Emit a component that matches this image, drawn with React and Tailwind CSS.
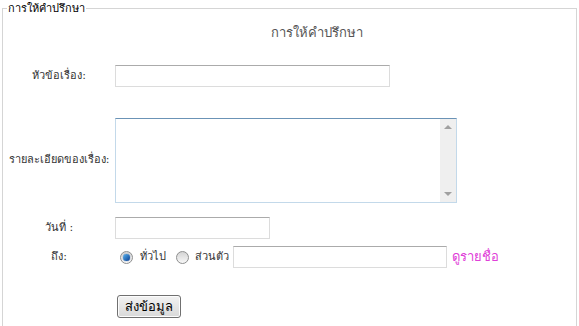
import React, { useState } from 'react';

const Radio = ({ checked, onClick }) => (
  <span
    onClick={onClick}
    className="inline-flex h-[13px] w-[13px] shrink-0 cursor-pointer items-center justify-center rounded-full border border-[#8e8f8f] bg-gradient-to-b from-[#d4d4d4] to-[#f8f8f8]"
  >
    {checked && (
      <span className="h-[7px] w-[7px] rounded-full bg-gradient-to-br from-[#5db6f0] to-[#0b3d91] shadow-[0_0_1px_#0b3d91]" />
    )}
  </span>
);

const App = () => {
  const [target, setTarget] = useState('all');

  return (
    <div className="h-[326px] w-[579px] overflow-hidden bg-white pt-[1px] font-['Tahoma','DejaVu_Sans','Noto_Sans',sans-serif] text-[11px] text-[#333]">
      <fieldset className="ml-[2px] mr-[2px] h-[340px] border border-[#d5d5d5] px-0 pb-2">
        <legend className="ml-[4px] px-[1px] text-[11px] leading-[15px] text-black">การให้คำปรึกษา</legend>

        {/* Title */}
        <div className="mt-[2px] flex h-[29px] items-center justify-center pl-[55px] text-[13px] text-[#555]">
          การให้คำปรึกษา
        </div>

        {/* Subject */}
        <div className="mt-[18px] flex items-center">
          <label className="w-[112px] text-center">หัวข้อเรื่อง:</label>
          <input className="h-[22px] w-[275px] border border-[#dcdcdc] border-t-[#ababab] px-1 text-[11px] outline-none" />
        </div>

        {/* Details */}
        <div className="mt-[31px] flex items-center">
          <label className="w-[112px] text-center">รายละเอียดของเรื่อง:</label>
          <div className="flex h-[85px] w-[342px] border border-[#c3d9ea] border-t-[#6b93b6]">
            <textarea className="flex-1 resize-none px-1 text-[11px] outline-none" />
            <div className="flex w-[16px] flex-col items-center justify-between bg-[#efefef] py-[6px]">
              <span className="h-0 w-0 border-x-[4px] border-b-[4px] border-x-transparent border-b-[#a0a0a0]" />
              <span className="h-0 w-0 border-x-[4px] border-t-[4px] border-x-transparent border-t-[#a0a0a0]" />
            </div>
          </div>
        </div>

        {/* Date */}
        <div className="mt-[14px] flex items-center">
          <label className="w-[112px] text-center">วันที่ :</label>
          <input className="h-[22px] w-[155px] border border-[#dcdcdc] border-t-[#ababab] px-1 text-[11px] outline-none" />
        </div>

        {/* To */}
        <div className="mt-[7px] flex items-center">
          <label className="w-[112px] text-center">ถึง:</label>
          <div className="flex items-center pl-[5px]">
            <Radio checked={target === 'all'} onClick={() => setTarget('all')} />
            <span className="ml-[7px]">ทั่วไป</span>
            <span className="ml-[10px] flex">
              <Radio checked={target === 'private'} onClick={() => setTarget('private')} />
            </span>
            <span className="ml-[6px]">ส่วนตัว</span>
            <input className="ml-[4px] h-[22px] w-[214px] border border-[#dcdcdc] border-t-[#ababab] px-1 text-[11px] outline-none" />
            <a href="#" className="ml-[5px] text-[13px] text-[#e040d8]">ดูรายชื่อ</a>
          </div>
        </div>

        {/* Submit */}
        <div className="mt-[27px] flex">
          <div className="w-[114px]" />
          <button className="h-[23px] rounded-[3px] border border-[#707070] bg-gradient-to-b from-[#f2f2f2] to-[#d9d9d9] px-[7px] text-[13px] text-black shadow-[inset_0_0_0_1px_#fcfcfc]">
            ส่งข้อมูล
          </button>
        </div>
      </fieldset>
    </div>
  );
};

export default App;
